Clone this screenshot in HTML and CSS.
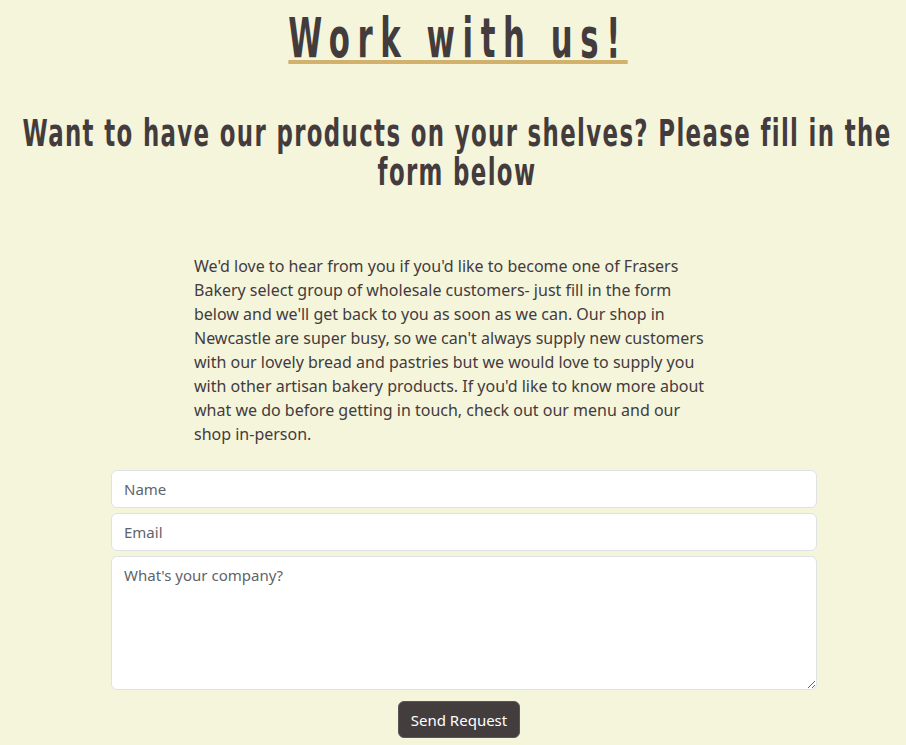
FILE: index.html
```html
<!DOCTYPE html>
<html lang="en">
<head>
<meta charset="utf-8">
<title>Work with us</title>
<link rel="stylesheet" href="styles.css">
</head>
<body>
<header class="title-wrap">
  <h1 class="title">Work with us!</h1>
</header>
<h2 class="subtitle">Want to have our products on your shelves? Please fill in the form below</h2>
<section class="intro">
  <p>We'd love to hear from you if you'd like to become one of Frasers Bakery select group of wholesale customers- just fill in the form below and we'll get back to you as soon as we can. Our shop in Newcastle are super busy, so we can't always supply new customers with our lovely bread and pastries but we would love to supply you with other artisan bakery products. If you'd like to know more about what we do before getting in touch, check out our menu and our shop in-person.</p>
</section>
<form class="contact">
  <input class="field" type="text" placeholder="Name">
  <input class="field" type="email" placeholder="Email">
  <textarea class="field area" placeholder="What's your company?"></textarea>
  <button class="send" type="button">Send Request</button>
</form>
</body>
</html>
```
FILE: styles.css
```css
* { box-sizing: border-box; }
body {
  margin: 0;
  background: #f5f5dc;
  color: #433b3c;
  font-family: "Noto Sans", "Open Sans", sans-serif;
}
.title-wrap {
  text-align: center;
  padding: 16px 0 0 10px;
}
.title {
  display: inline-block;
  margin: 0;
  font-family: "DejaVu Sans", sans-serif;
  font-weight: 700;
  font-size: 55px;
  line-height: 44px;
  letter-spacing: 13.5px;
  border-bottom: 4px solid #d2b16d;
  transform: scaleX(0.56);
}
.subtitle {
  width: 896px;
  margin: 50px 0 0 9px;
  text-align: center;
  font-family: "DejaVu Sans", sans-serif;
  font-weight: 700;
  font-size: 22.87px;
  line-height: 24.07px;
  letter-spacing: 1.36px;
  transform-origin: top center;
  transform: scaleY(1.618);
}
.intro {
  margin: 92px 0 0 194px;
  width: 524px;
}
.intro p {
  margin: 0;
  font-size: 16px;
  line-height: 24px;
}
.contact {
  margin: 24px 0 0 111px;
  width: 706px;
  display: flex;
  flex-direction: column;
  gap: 5px;
  align-items: stretch;
}
.field {
  display: block;
  width: 100%;
  height: 38px;
  padding: 6px 12px;
  border: 1px solid #dee2e6;
  border-radius: 6px;
  background: #fff;
  font-family: "Noto Sans", sans-serif;
  font-size: 15px;
  color: #212529;
}
.field::placeholder { color: #5e646b; }
.area {
  height: 134px;
  resize: vertical;
  padding-top: 8px;
}
.send {
  align-self: center;
  margin: 6px 0 0 -10px;
  height: 37px;
  padding: 0 12px;
  background: #443d3e;
  color: #fff;
  border: 1px solid #5c5556;
  border-radius: 6px;
  font-family: "Noto Sans", sans-serif;
  font-size: 15px;
}
```
